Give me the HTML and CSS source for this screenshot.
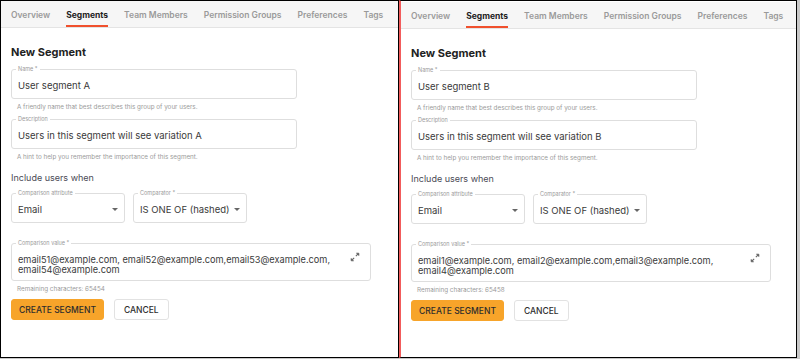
FILE: index.html
```html
<!DOCTYPE html>
<html lang="en">
<head>
    <meta charset="UTF-8">
    <meta name="viewport" content="width=device-width, initial-scale=1.0">
    <title>Segments - compare</title>
    <link rel="stylesheet" href="styles.css">
</head>
<body>
    <div class="compare">
        <!-- variation A -->
        <section class="pane">
            <nav class="tabs">
                <span class="tab">Overview</span>
                <span class="tab active">Segments</span>
                <span class="tab">Team Members</span>
                <span class="tab">Permission Groups</span>
                <span class="tab">Preferences</span>
                <span class="tab">Tags</span>
            </nav>
            <div class="form">
                <h2 class="title">New Segment</h2>

                <div class="field wide">
                    <span class="field-label">Name *</span>
                    <div class="field-value">User segment A</div>
                </div>
                <p class="hint">A friendly name that best describes this group of your users.</p>

                <div class="field wide">
                    <span class="field-label">Description</span>
                    <div class="field-value">Users in this segment will see variation A</div>
                </div>
                <p class="hint">A hint to help you remember the importance of this segment.</p>

                <h3 class="section">Include users when</h3>
                <div class="row">
                    <div class="field select">
                        <span class="field-label">Comparison attribute</span>
                        <div class="field-value">Email</div>
                        <span class="caret"></span>
                    </div>
                    <div class="field select">
                        <span class="field-label">Comparator *</span>
                        <div class="field-value">IS ONE OF (hashed)</div>
                        <span class="caret"></span>
                    </div>
                </div>

                <div class="field area">
                    <span class="field-label">Comparison value *</span>
                    <div class="field-value">email51@example.com, email52@example.com,email53@example.com, email54@example.com</div>
                    <svg class="expand" viewBox="0 0 24 24" width="10" height="10">
                        <path d="M21 3l-7 7M21 3h-6M21 3v6M3 21l7-7M3 21h6M3 21v-6" fill="none" stroke="#666" stroke-width="2.6"/>
                    </svg>
                </div>
                <p class="hint short">Remaining characters: 65454</p>

                <div class="actions">
                    <button class="btn primary">CREATE SEGMENT</button>
                    <button class="btn">CANCEL</button>
                </div>
            </div>
        </section>

        <!-- variation B -->
        <section class="pane pane-b">
            <nav class="tabs">
                <span class="tab">Overview</span>
                <span class="tab active">Segments</span>
                <span class="tab">Team Members</span>
                <span class="tab">Permission Groups</span>
                <span class="tab">Preferences</span>
                <span class="tab">Tags</span>
            </nav>
            <div class="form">
                <h2 class="title">New Segment</h2>

                <div class="field wide">
                    <span class="field-label">Name *</span>
                    <div class="field-value">User segment B</div>
                </div>
                <p class="hint">A friendly name that best describes this group of your users.</p>

                <div class="field wide">
                    <span class="field-label">Description</span>
                    <div class="field-value">Users in this segment will see variation B</div>
                </div>
                <p class="hint">A hint to help you remember the importance of this segment.</p>

                <h3 class="section">Include users when</h3>
                <div class="row">
                    <div class="field select">
                        <span class="field-label">Comparison attribute</span>
                        <div class="field-value">Email</div>
                        <span class="caret"></span>
                    </div>
                    <div class="field select">
                        <span class="field-label">Comparator *</span>
                        <div class="field-value">IS ONE OF (hashed)</div>
                        <span class="caret"></span>
                    </div>
                </div>

                <div class="field area">
                    <span class="field-label">Comparison value *</span>
                    <div class="field-value">email1@example.com, email2@example.com,email3@example.com, email4@example.com</div>
                    <svg class="expand" viewBox="0 0 24 24" width="10" height="10">
                        <path d="M21 3l-7 7M21 3h-6M21 3v6M3 21l7-7M3 21h6M3 21v-6" fill="none" stroke="#666" stroke-width="2.6"/>
                    </svg>
                </div>
                <p class="hint short">Remaining characters: 65458</p>

                <div class="actions">
                    <button class="btn primary">CREATE SEGMENT</button>
                    <button class="btn">CANCEL</button>
                </div>
            </div>
        </section>
    </div>
</body>
</html>
```

FILE: styles.css
```css
:root {
    --ink: #3a3a3a;
    --muted: #9a9a9a;
    --line: #dedede;
    --accent: #f0502d;     /* active tab */
    --orange: #f7a42a;     /* primary button */
}

* {
    margin: 0;
    padding: 0;
    box-sizing: border-box;
}

body {
    background: #c8c8c8;
    font-family: Inter, "Open Sans", sans-serif;
    color: var(--ink);
}

.compare {
    display: flex;
    height: 358px;
}

.pane {
    width: 399px;
    background: #fff;
    border: 1px solid #000;
    overflow: hidden;
}

.pane-b {
    width: 398px;
    border-left: 2px solid #f25c5c;
    padding-top: 1px;
    margin-right: 3px;
}

.tabs {
    display: flex;
    gap: 16px;
    height: 27px;
    padding: 0 10px;
    background: #f6f6f6;
    border-bottom: 1px solid #e4e4e4;
}

.tab {
    font-size: 8.5px;
    font-weight: 600;
    color: #9a9a9a;
    line-height: 26px;
    padding-top: 1px;
    white-space: nowrap;
}

.tab.active {
    color: #222;
    font-weight: 700;
    border-bottom: 2px solid var(--accent);
}

.form {
    padding: 17px 10px 0;
}

.title {
    font-size: 11px;
    font-weight: 700;
    color: #222;
    line-height: 15px;
    margin-bottom: 9px;
}

.field {
    position: relative;
    border: 1px solid var(--line);
    border-radius: 3px;
    height: 30px;
    padding: 0 6px;
    display: flex;
    align-items: center;
}

.field.wide {
    width: 286px;
}

.field-label {
    position: absolute;
    top: -4px;
    left: 4px;
    padding: 0 2px;
    background: #fff;
    font-size: 5.5px;
    line-height: 7px;
    color: var(--muted);
}

.field-value {
    font-size: 9.5px;
    line-height: 10px;
    padding-top: 4px;
}

.hint {
    font-size: 6.3px;
    color: var(--muted);
    line-height: 8px;
    padding: 4px 0 0 6px;
    height: 20px;
}

.hint.short {
    height: 18px;
}

.section {
    font-size: 9px;
    font-weight: 400;
    color: #4a4a55;
    line-height: 12px;
    margin: 3px 0 9px;
}

.row {
    display: flex;
    gap: 8px;
    margin-bottom: 20px;
}

.field.select {
    width: 114px;
}

.caret {
    position: absolute;
    right: 6px;
    top: 14px;
    border: 3px solid transparent;
    border-top: 3px solid #666;
    border-bottom: none;
}

.field.area {
    width: 360px;
    height: 38px;
    align-items: flex-start;
    padding-top: 8px;
    padding-right: 36px;
}

.field.area .field-value {
    font-size: 9.2px;
    line-height: 9.5px;
    padding-top: 3px;
}

.expand {
    position: absolute;
    right: 10px;
    top: 8px;
}

.actions {
    display: flex;
    gap: 10px;
}

.btn {
    font-family: inherit;
    font-size: 8.5px;
    font-weight: 500;
    color: #2d2d2d;
    background: #fff;
    border: 1px solid #e2e2e2;
    border-radius: 3px;
    height: 21px;
    padding: 0 9px;
    white-space: nowrap;
}

.btn.primary {
    background: var(--orange);
    border-color: var(--orange);
    width: 93px;
    padding: 0;
}
```
